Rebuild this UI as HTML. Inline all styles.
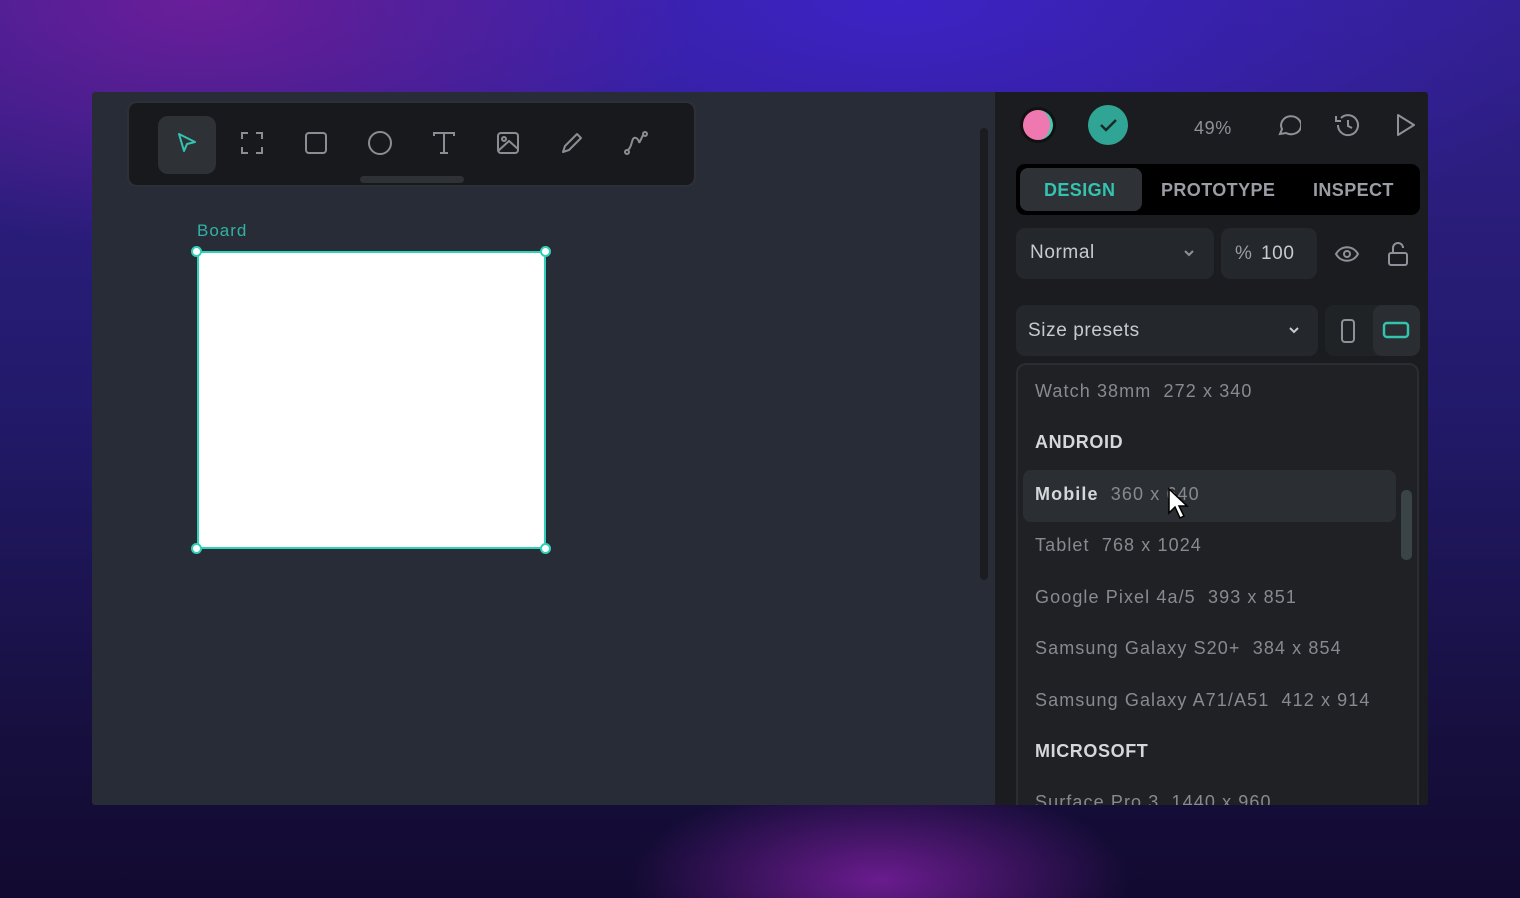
<!DOCTYPE html>
<html><head><style>
*{box-sizing:border-box;margin:0;padding:0}
body{width:1520px;height:898px;overflow:hidden;position:relative;font-family:"Liberation Sans",sans-serif;
background:
radial-gradient(ellipse 250px 100px at 880px 880px,#6a1c8e 0%,rgba(106,28,142,0) 100%),
radial-gradient(ellipse 500px 250px at 200px 0px,#6a1e9a 0%,rgba(106,30,154,0) 100%),
radial-gradient(ellipse 700px 300px at 900px 0px,#3d22c4 0%,rgba(61,34,196,0) 100%),
linear-gradient(180deg,#32208e 0%,#221a6a 45%,#171040 80%,#120a30 100%);}
.win{position:absolute;left:92px;top:92px;width:1336px;height:713px;background:#282c37;overflow:hidden;border-radius:3px}
.tb{position:absolute;left:35px;top:9px;width:569px;height:86px;background:#18191c;border:2px solid #2e3038;border-radius:10px}
.tb .sel{position:absolute;left:29px;top:13px;width:58px;height:58px;background:#2e3236;border-radius:10px}
.tb .bar{position:absolute;left:231px;top:73px;width:104px;height:7px;background:#2e3236;border-radius:4px}
.tb svg{position:absolute;top:27px}
.board-l{position:absolute;left:105px;top:129px;color:#30b3a4;font-size:17px;letter-spacing:1px}
.board{position:absolute;left:105px;top:159px;width:349px;height:298px;background:#fff;border:2px solid #31d0b8}
.h{position:absolute;width:11px;height:11px;border-radius:50%;background:#fff;border:2px solid #31d0b8}
.vs{position:absolute;left:888px;top:36px;width:8px;height:452px;background:#1a1c20;border-radius:4px}
.panel{position:absolute;left:903px;top:0;width:433px;height:713px;background:#1b1c1f}
.t{position:absolute;color:#8e9199;font-size:19px;letter-spacing:.6px}
.tabs{position:absolute;left:21px;top:72px;width:404px;height:51px;background:#000;border-radius:9px}
.tabs .a{position:absolute;left:4px;top:4px;width:122px;height:43px;background:#2e3135;border-radius:8px}
.tab{position:absolute;top:16px;font-size:18px;font-weight:bold;color:#9a9da3;letter-spacing:.4px}
.box{position:absolute;background:#24272b;border-radius:9px}
.dd{position:absolute;left:21px;top:271px;width:403px;height:460px;background:#1f2124;border:2px solid #2a2d31;border-radius:10px}
.it{position:absolute;left:17px;font-size:18px;color:#878a90;letter-spacing:1.1px}
.hd{position:absolute;left:17px;font-size:18px;color:#d5d7da;font-weight:bold;letter-spacing:.6px}
</style></head><body>
<div class="win">
 <div class="tb">
  <div class="sel"></div>
  <svg style="left:46px" width="24" height="26" viewBox="0 0 24 26" fill="none" stroke="#34c3b0" stroke-width="2" stroke-linejoin="round"><path d="M4 4 L20 12 L12 14 L9 21 Z"/></svg>
  <svg style="left:110px" width="26" height="26" viewBox="0 0 26 26" fill="none" stroke="#8a8d92" stroke-width="2"><path d="M3 9V3h6M17 3h6v6M23 17v6h-6M9 23H3v-6"/></svg>
  <svg style="left:174px" width="26" height="26" viewBox="0 0 26 26" fill="none" stroke="#8a8d92" stroke-width="2"><rect x="3" y="3" width="20" height="20" rx="3"/></svg>
  <svg style="left:238px" width="26" height="26" viewBox="0 0 26 26" fill="none" stroke="#8a8d92" stroke-width="2"><circle cx="13" cy="13" r="11"/></svg>
  <svg style="left:302px" width="26" height="26" viewBox="0 0 26 26" fill="none" stroke="#8a8d92" stroke-width="2"><path d="M3 6V3h20v3M13 3v20M9 23h8"/></svg>
  <svg style="left:366px" width="26" height="26" viewBox="0 0 26 26" fill="none" stroke="#8a8d92" stroke-width="2"><rect x="3" y="3" width="20" height="20" rx="3"/><circle cx="9" cy="9" r="2"/><path d="M3 21l11-10 9 8"/></svg>
  <svg style="left:430px" width="26" height="26" viewBox="0 0 26 26" fill="none" stroke="#8a8d92" stroke-width="2" stroke-linejoin="round"><path d="M4 22l2-6L18 4l4 4L10 20z"/></svg>
  <svg style="left:494px" width="26" height="26" viewBox="0 0 26 26" fill="none" stroke="#8a8d92" stroke-width="2"><circle cx="4" cy="22" r="2"/><circle cx="22" cy="4" r="2"/><path d="M5 20C10 16 8 6 13 8S14 18 20 5"/></svg>
  <div class="bar"></div>
 </div>
 <div class="board-l">Board</div>
 <div class="board"></div>
 <div class="h" style="left:99px;top:154px"></div><div class="h" style="left:448px;top:154px"></div>
 <div class="h" style="left:99px;top:451px"></div><div class="h" style="left:448px;top:451px"></div>
 <div class="vs"></div>
 <div class="panel">
  <div style="position:absolute;left:25px;top:15px;width:36px;height:36px;border-radius:50%;background:#111;padding:3px"><div style="width:30px;height:30px;border-radius:50%;background:#ef78b0;border-right:3px solid #48c8b0"></div></div>
  <div style="position:absolute;left:93px;top:13px;width:40px;height:40px;border-radius:50%;background:#31a595"><svg width="40" height="40" viewBox="0 0 40 40" fill="none" stroke="#1a2a2a" stroke-width="2.5"><path d="M13 20l5 5 10-10"/></svg></div>
  <div class="t" style="left:199px;top:26px;font-size:18px">49%</div>
  <svg style="position:absolute;left:280px;top:20px" width="26" height="26" viewBox="0 0 26 26" fill="none" stroke="#8e9199" stroke-width="2"><path d="M5 22l2-5A10 9 0 1 1 11 21z"/></svg>
  <svg style="position:absolute;left:338px;top:20px" width="28" height="26" viewBox="0 0 28 26" fill="none" stroke="#8e9199" stroke-width="2"><path d="M5 13A10 10 0 1 0 8 6M3 4v5h5M15 8v6l4 2"/></svg>
  <svg style="position:absolute;left:400px;top:20px" width="22" height="26" viewBox="0 0 22 26" fill="none" stroke="#8e9199" stroke-width="2" stroke-linejoin="round"><path d="M3 3l16 10L3 23z"/></svg>
  <div class="tabs"><div class="a"></div>
   <div class="tab" style="left:28px;color:#34c3b0">DESIGN</div>
   <div class="tab" style="left:145px">PROTOTYPE</div>
   <div class="tab" style="left:297px">INSPECT</div>
  </div>
  <div class="box" style="left:21px;top:136px;width:198px;height:51px"><span class="t" style="left:14px;top:14px;color:#c8cace">Normal</span><svg style="position:absolute;left:166px;top:20px" width="14" height="10" viewBox="0 0 14 10" fill="none" stroke="#8e9199" stroke-width="2"><path d="M3 3l4 4 4-4"/></svg></div>
  <div class="box" style="left:226px;top:136px;width:96px;height:51px"><span class="t" style="left:14px;top:15px;color:#9a9da3">%</span><span class="t" style="left:40px;top:15px;color:#c8cace">100</span></div>
  <svg style="position:absolute;left:339px;top:152px" width="26" height="20" viewBox="0 0 26 20" fill="none" stroke="#8e9199" stroke-width="2"><path d="M2 10C7 1 19 1 24 10C19 19 7 19 2 10z"/><circle cx="13" cy="10" r="3"/></svg>
  <svg style="position:absolute;left:392px;top:148px" width="22" height="28" viewBox="0 0 22 28" fill="none" stroke="#8e9199" stroke-width="2"><rect x="2" y="13" width="18" height="12" rx="2"/><path d="M6 13V8a5 5 0 0 1 10 0"/></svg>
  <div class="box" style="left:21px;top:213px;width:302px;height:51px"><span class="t" style="left:12px;top:15px;color:#c8cace">Size presets</span><svg style="position:absolute;left:271px;top:20px" width="14" height="10" viewBox="0 0 14 10" fill="none" stroke="#c8cace" stroke-width="2"><path d="M3 3l4 4 4-4"/></svg></div>
  <div class="box" style="left:330px;top:213px;width:95px;height:51px;background:#202326"><div style="position:absolute;left:48px;top:0;width:47px;height:51px;background:#2a2d31;border-radius:9px"></div>
   <svg style="position:absolute;left:14px;top:13px" width="18" height="26" viewBox="0 0 18 26" fill="none" stroke="#8e9199" stroke-width="2"><rect x="3" y="2" width="12" height="22" rx="3"/></svg>
   <svg style="position:absolute;left:56px;top:15px" width="30" height="20" viewBox="0 0 30 20" fill="none" stroke="#34c3b0" stroke-width="2.5"><rect x="3" y="3" width="24" height="14" rx="3"/></svg>
  </div>
  <div class="dd">
   <div class="it" style="top:16px">Watch 38mm&nbsp;&nbsp;272 x 340</div>
   <div class="hd" style="top:67px">ANDROID</div>
   <div style="position:absolute;left:5px;top:105px;width:373px;height:52px;background:#2b2e32;border-radius:8px"></div>
   <div class="it" style="top:119px"><b style="color:#d5d7da">Mobile</b>&nbsp;&nbsp;360 x 640</div>
   <div style="position:absolute;left:383px;top:125px;width:11px;height:70px;background:#3a4346;border-radius:5px"></div>
   <div class="it" style="top:170px">Tablet&nbsp;&nbsp;768 x 1024</div>
   <div class="it" style="top:222px">Google Pixel 4a/5&nbsp;&nbsp;393 x 851</div>
   <div class="it" style="top:273px">Samsung Galaxy S20+&nbsp;&nbsp;384 x 854</div>
   <div class="it" style="top:325px">Samsung Galaxy A71/A51&nbsp;&nbsp;412 x 914</div>
   <div class="hd" style="top:376px">MICROSOFT</div>
   <div class="it" style="top:427px">Surface Pro 3&nbsp;&nbsp;1440 x 960</div>
  </div>
  <svg style="position:absolute;left:172px;top:395px" width="22" height="34" viewBox="0 0 22 34" ><path d="M2 2v24l6-6 5 11 4-2-5-10h8z" fill="#fff" stroke="#000" stroke-width="1.5"/></svg>
 </div>
</div>
</body></html>
